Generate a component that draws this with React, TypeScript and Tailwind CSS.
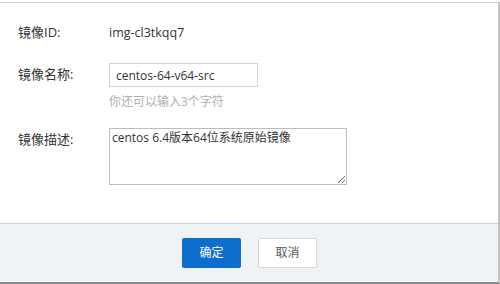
import { useState } from 'react';

const font = { fontFamily: '"Open Sans", "Noto Sans CJK SC", sans-serif' };

const App = () => {
  const [name, setName] = useState('centos-64-v64-src');
  const [desc, setDesc] = useState('centos 6.4版本64位系统原始镜像');

  return (
    <div className="w-[500px] h-[284px] bg-white pt-[2px] text-[#333]" style={font}>
      <div className="h-[282px] flex flex-col border-t border-r-2 border-b-2 border-t-[#cfcfcf] border-r-[#c4c4c4] border-b-[#8a8a8a]">
        {/* Form */}
        <div className="h-[220px] px-[18px] pt-[18px]">
          <div className="flex items-center h-[24px]">
            <div className="w-[91px] text-[13px]">镜像ID:</div>
            <div className="text-[12.5px]">img-cl3tkqq7</div>
          </div>

          <div className="flex items-center mt-[18px]">
            <div className="w-[91px] text-[13px]">镜像名称:</div>
            <input
              value={name}
              onChange={(e) => setName(e.target.value)}
              className="w-[149px] h-[24px] border border-[#d4d4d4] px-[6px] text-[12px] outline-none"
            />
          </div>
          <div className="pl-[91px] mt-[6px] h-[18px] text-[12px] text-[#b0b0b0] leading-[18px]">你还可以输入3个字符</div>

          <div className="flex items-start mt-[17px]">
            <div className="w-[91px] text-[13px] pt-[2px]">镜像描述:</div>
            <textarea
              value={desc}
              onChange={(e) => setDesc(e.target.value)}
              className="w-[238px] h-[57px] border border-[#bdbdbd] px-[2px] py-0 text-[12px] leading-[18px] outline-none"
            />
          </div>
        </div>

        {/* Footer */}
        <div className="flex-1 bg-[#eff3f6] border-t border-[#cfd3d6] flex justify-center items-center gap-[17px] pl-[1px]">
          <button className="w-[59px] h-[30px] rounded-[2px] bg-[#0d6ecb] text-white text-[12px]">确定</button>
          <button className="w-[59px] h-[30px] rounded-[2px] bg-white border border-[#d6d9dc] text-[#555] text-[12px]">取消</button>
        </div>
      </div>
    </div>
  );
};

export default App;
